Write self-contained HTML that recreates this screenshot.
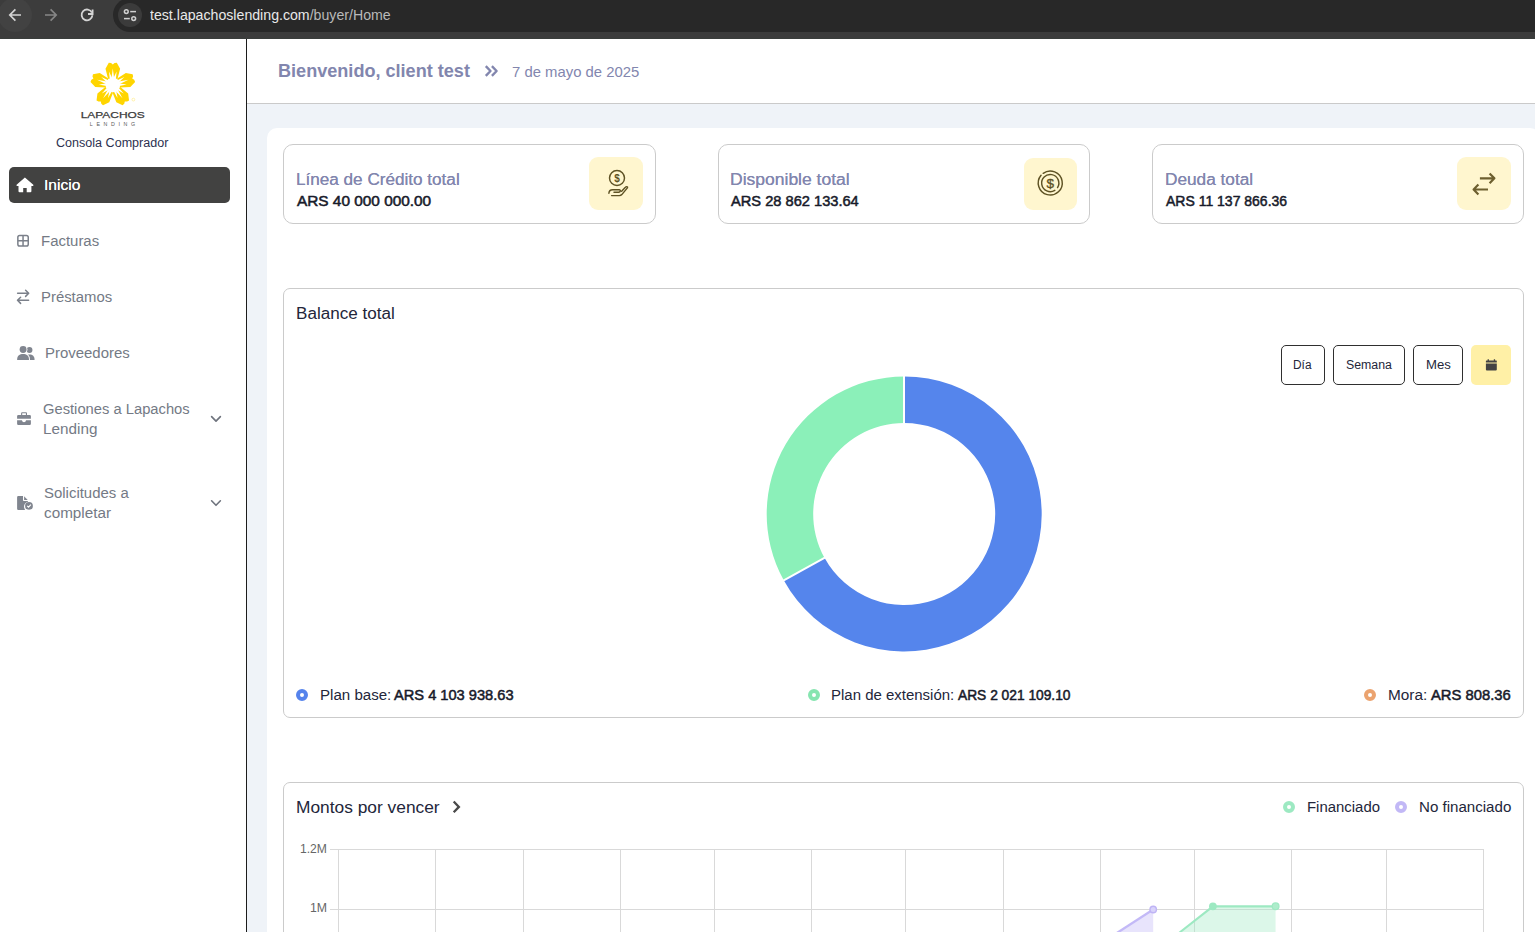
<!DOCTYPE html>
<html lang="es"><head><meta charset="utf-8"><title>Lapachos Lending - Consola Comprador</title>
<style>
*{box-sizing:border-box;margin:0;padding:0}
html,body{width:1535px;height:932px;overflow:hidden;background:#fff;font-family:"Liberation Sans",sans-serif}
.abs{position:absolute}
.t{position:absolute;white-space:nowrap;font-family:"Liberation Sans",sans-serif}
.t b{font-weight:400;-webkit-text-stroke:.5px currentColor}
#bar{position:absolute;left:0;top:0;width:1535px;height:38px;background:#3c3c3c}
#bar .edge{position:absolute;left:0;top:38px;width:1535px;height:1px;background:#3a3e3c}
#pill{position:absolute;left:113px;top:-2px;width:1500px;height:34px;border-radius:17px;background:#282828}
#tune{position:absolute;left:117.5px;top:3px;width:24px;height:24px;border-radius:12px;background:#3b3b3b}
#backhl{position:absolute;left:-2px;top:-2px;width:34px;height:34px;border-radius:17px;background:#424242}
#side{position:absolute;left:0;top:39px;width:246px;height:893px;background:#fff}
#sideline{position:absolute;left:246px;top:39px;width:1px;height:893px;background:#1c1c1c}
#sideline2{position:absolute;left:247px;top:39px;width:1px;height:893px;background:rgba(40,40,40,.28)}
#head{position:absolute;left:247px;top:39px;width:1288px;height:64px;background:#fff}
#headline{position:absolute;left:247px;top:103px;width:1288px;height:1px;background:#cacaca}
#main{position:absolute;left:247px;top:104px;width:1288px;height:828px;background:#eff3f8}
#cont{position:absolute;left:267px;top:128px;width:1273px;height:830px;background:#fff;border-radius:10px}
.card{position:absolute;border:1px solid #cbcbcb;border-radius:10px;background:#fff}
.ibox{position:absolute;width:54px;height:53px;border-radius:9px;background:#fff6cf}
#active{position:absolute;left:9px;top:167px;width:221px;height:36px;border-radius:5px;background:#424241}
.btn{position:absolute;top:345px;height:40px;border:1px solid #2f2f2f;border-radius:5px;background:#fff}
#cal{position:absolute;left:1471px;top:345px;width:40px;height:40px;border-radius:5px;background:#fff0a6}
.dot{position:absolute;width:12px;height:12px;border-radius:6px;border:4px solid;background:#fff}
svg{position:absolute;overflow:visible}

</style></head>
<body>
<div id="bar"><div id="backhl"></div><div id="pill"></div><div id="tune"></div><div class="edge"></div></div>
<div id="side"></div><div id="sideline"></div><div id="sideline2"></div>
<div id="head"></div><div id="headline"></div>
<div id="main"></div><div id="cont"></div>
<div id="active"></div>
<div class="card" style="left:283px;top:144px;width:373px;height:80px"></div>
<div class="card" style="left:718px;top:144px;width:372px;height:80px"></div>
<div class="card" style="left:1152px;top:144px;width:372px;height:80px"></div>
<div class="ibox" style="left:589px;top:157px"></div>
<div class="ibox" style="left:1024px;top:158px;width:53px;height:52px"></div>
<div class="ibox" style="left:1457px;top:157px"></div>
<div class="card" style="left:283px;top:288px;width:1241px;height:430px;border-radius:7px"></div>
<div class="card" style="left:283px;top:782px;width:1241px;height:300px;border-radius:7px"></div>
<div class="btn" style="left:1281px;width:44px"></div>
<div class="btn" style="left:1333px;width:72px"></div>
<div class="btn" style="left:1413px;width:50px"></div>
<div id="cal"></div>
<div class="dot" style="left:296px;top:689px;border-color:#5583ec"></div>
<div class="dot" style="left:808px;top:689px;border-color:#86e5b0"></div>
<div class="dot" style="left:1364px;top:689px;border-color:#eba36f"></div>
<div class="dot" style="left:1283px;top:801px;border-color:#9de9c2"></div>
<div class="dot" style="left:1395px;top:801px;border-color:#c2b8f6"></div>
<svg style="left:0;top:0" width="120" height="38" viewBox="0 0 120 38" fill="none" stroke-linecap="butt" stroke-linejoin="miter">
<path d="M21 15H10.2M15.4 9.4L9.8 15l5.6 5.6" stroke="#d4d4d4" stroke-width="1.7"/>
<path d="M45 15h10.8M50.6 9.4l5.6 5.6-5.6 5.6" stroke="#868686" stroke-width="1.7"/>
<path d="M91.9 12.6A5.4 5.4 0 1 0 92.4 15.3" stroke="#d4d4d4" stroke-width="1.8"/>
<path d="M92.6 9.4v4.6h-4.6" stroke="#d4d4d4" stroke-width="1.8"/>
</svg>
<svg style="left:117.5px;top:3px" width="24" height="24" viewBox="0 0 24 24" fill="none" stroke="#d0d0d0" stroke-width="1.5">
<circle cx="8.3" cy="8.6" r="1.9"/><path d="M12.2 8.6H18"/>
<circle cx="15.7" cy="15.6" r="1.9"/><path d="M6 15.6H11.8"/>
</svg>
<svg style="left:0;top:39px" width="246" height="120" viewBox="0 39 246 120">
<g transform="translate(112.8 84.9) scale(1.03)"><g transform="rotate(0)"><path d="M-4.6,-6 L-7.1,-15.6 L-3.9,-21.5 L-1.7,-21.3 L0,-19.8 L1.7,-21.3 L3.9,-21.5 L7.1,-15.6 L4.6,-6 Z" fill="#ffd500"/><path transform="rotate(-16)" d="M-1.5,-5 L0,-13.5 L1.5,-5 Z" fill="#fff"/><path transform="rotate(0)" d="M-1.5,-5 L0,-16 L1.5,-5 Z" fill="#fff"/><path transform="rotate(16)" d="M-1.5,-5 L0,-13.5 L1.5,-5 Z" fill="#fff"/></g><g transform="rotate(72)"><path d="M-4.6,-6 L-7.1,-15.6 L-3.9,-21.5 L-1.7,-21.3 L0,-19.8 L1.7,-21.3 L3.9,-21.5 L7.1,-15.6 L4.6,-6 Z" fill="#ffd500"/><path transform="rotate(-16)" d="M-1.5,-5 L0,-13.5 L1.5,-5 Z" fill="#fff"/><path transform="rotate(0)" d="M-1.5,-5 L0,-16 L1.5,-5 Z" fill="#fff"/><path transform="rotate(16)" d="M-1.5,-5 L0,-13.5 L1.5,-5 Z" fill="#fff"/></g><g transform="rotate(144)"><path d="M-4.6,-6 L-7.1,-15.6 L-3.9,-21.5 L-1.7,-21.3 L0,-19.8 L1.7,-21.3 L3.9,-21.5 L7.1,-15.6 L4.6,-6 Z" fill="#ffd500"/><path transform="rotate(-16)" d="M-1.5,-5 L0,-13.5 L1.5,-5 Z" fill="#fff"/><path transform="rotate(0)" d="M-1.5,-5 L0,-16 L1.5,-5 Z" fill="#fff"/><path transform="rotate(16)" d="M-1.5,-5 L0,-13.5 L1.5,-5 Z" fill="#fff"/></g><g transform="rotate(216)"><path d="M-4.6,-6 L-7.1,-15.6 L-3.9,-21.5 L-1.7,-21.3 L0,-19.8 L1.7,-21.3 L3.9,-21.5 L7.1,-15.6 L4.6,-6 Z" fill="#ffd500"/><path transform="rotate(-16)" d="M-1.5,-5 L0,-13.5 L1.5,-5 Z" fill="#fff"/><path transform="rotate(0)" d="M-1.5,-5 L0,-16 L1.5,-5 Z" fill="#fff"/><path transform="rotate(16)" d="M-1.5,-5 L0,-13.5 L1.5,-5 Z" fill="#fff"/></g><g transform="rotate(288)"><path d="M-4.6,-6 L-7.1,-15.6 L-3.9,-21.5 L-1.7,-21.3 L0,-19.8 L1.7,-21.3 L3.9,-21.5 L7.1,-15.6 L4.6,-6 Z" fill="#ffd500"/><path transform="rotate(-16)" d="M-1.5,-5 L0,-13.5 L1.5,-5 Z" fill="#fff"/><path transform="rotate(0)" d="M-1.5,-5 L0,-16 L1.5,-5 Z" fill="#fff"/><path transform="rotate(16)" d="M-1.5,-5 L0,-13.5 L1.5,-5 Z" fill="#fff"/></g><circle r="6.8" fill="#fff"/></g>
<circle cx="133.4" cy="99.6" r="1.4" fill="none" stroke="#ffe97a" stroke-width=".6"/>
<text x="80.7" y="117.7" font-family="Liberation Sans, sans-serif" font-weight="400" font-size="9.2" fill="#3b3b3b" stroke="#3b3b3b" stroke-width=".25" textLength="64.1" lengthAdjust="spacingAndGlyphs">LAPACHOS</text>
<text x="89.8" y="125.9" font-family="Liberation Sans, sans-serif" font-weight="400" font-size="5.3" fill="#5a5a5a" textLength="45.4" lengthAdjust="spacing">LENDING</text>
</svg>
<svg style="left:0;top:160px" width="246" height="370" viewBox="0 160 246 370">
<!-- home -->
<path d="M24.9 177.5 L16.6 184.7 V186.1 H18.5 V191.2 Q18.5 192.3 19.6 192.3 H23.2 V188 H26.7 V192.3 H30.3 Q31.4 192.3 31.4 191.2 V186.1 H33.3 V184.7 Z" fill="#fff"/>
<!-- grid -->
<g fill="none" stroke="#7b808a" stroke-width="1.5">
<rect x="17.85" y="235.55" width="10.4" height="10.4" rx="1.8"/>
<path d="M23.05 235.6V246M17.9 240.75H28.2"/>
</g>
<!-- arrows -->
<g fill="none" stroke="#7b808a" stroke-width="1.5" stroke-linecap="round" stroke-linejoin="round">
<path d="M17.6 293.3H28.6M25.6 290.3l3.1 3-3.1 3.1"/>
<path d="M28.6 300.3H17.6M20.6 297.3l-3.1 3 3.1 3.1"/>
</g>
<!-- users -->
<g fill="#80858f">
<circle cx="29.5" cy="350" r="2.95"/>
<path d="M25 359.9 C25 355.8 27 354.4 29.6 354.4 C32.6 354.4 34.6 356.2 34.6 359.9 Z"/>
<circle cx="23.1" cy="349.5" r="4.35" fill="#fff"/>
<path d="M17.1 359.9 C17.1 355.6 19.8 354.1 23.1 354.1 C26.4 354.1 29 355.6 29 359.9 Z" fill="#fff" stroke="#fff" stroke-width="2"/>
<circle cx="23.1" cy="349.5" r="3.45"/>
<path d="M17.1 359.9 C17.1 355.6 19.8 354.1 23.1 354.1 C26.4 354.1 29 355.6 29 359.9 Z"/>
</g>
<!-- briefcase -->
<g fill="#80858f">
<path d="M17.1 416.3 Q17.1 415.1 18.3 415.1 H29.7 Q30.9 415.1 30.9 416.3 V418.8 H17.1Z"/>
<path d="M17.1 420.2 H21.9 Q22.3 422.3 24 422.3 Q25.7 422.3 26.1 420.2 H30.9 V423.8 Q30.9 425 29.7 425 H18.3 Q17.1 425 17.1 423.8Z"/>
<path d="M21.1 415.3V413.2Q21.1 412.2 22.1 412.2H26Q27 412.2 27 413.2V415.3H25.9V413.3H22.2V415.3Z"/>
</g>
<!-- file check -->
<g fill="#80858f">
<path d="M18.3 496 H23 V500.2 Q23 501 23.8 501 H27.9 V501.8 A5 5 0 0 0 25.2 509.9 H18.3 Q17.1 509.9 17.1 508.7 V497.2 Q17.1 496 18.3 496Z"/>
<path d="M24.1 496.2 L27.7 499.9 H24.1Z"/>
<circle cx="29" cy="505.9" r="3.9"/>
</g>
<path d="M27.2 505.9l1.3 1.3 2.4-2.6" fill="none" stroke="#fff" stroke-width="1.1"/>
<!-- chevrons -->
<g fill="none" stroke="#6e737d" stroke-width="1.6" stroke-linecap="round" stroke-linejoin="round">
<path d="M211.6 416.6l4.4 4.5 4.4-4.5"/>
<path d="M211.6 500.8l4.4 4.5 4.4-4.5"/>
</g>
</svg>
<svg style="left:580px;top:150px" width="950" height="70" viewBox="580 150 950 70" fill="none" stroke="#5e5224" stroke-width="1.45" stroke-linecap="round" stroke-linejoin="round">
<!-- hand coin -->
<circle cx="617" cy="178" r="7.5"/>
<path d="M608.9 193.3 C609 190.9 610.6 189.7 612.6 189.7 H619.1 Q620.6 189.9 620.3 191 Q620 192.1 618.8 192.2 H614"/>
<path d="M611.6 195.6 H619.4 Q620.9 195.6 621.8 194.6 L627.4 187.9 Q627.9 186.6 626.6 186.6 Q626 186.6 625.4 187.3 L621.6 191.3"/>
<text x="617" y="181.6" text-anchor="middle" font-family="Liberation Sans, sans-serif" font-weight="700" font-size="10" fill="#5e5224" stroke="none">$</text>
<!-- double circle -->
<path d="M1043.20 173.34A12 12 0 1 1 1041.06 175.34"/><path d="M1054.81 190.34A8.6 8.6 0 1 1 1057.54 187.61"/>
<text x="1050.3" y="187.8" text-anchor="middle" font-family="Liberation Sans, sans-serif" font-weight="400" font-size="13.5" fill="#5e5224" stroke="#5e5224" stroke-width=".35">$</text>
<!-- arrows -->
<g stroke="#6d5f2f" stroke-width="2.2" stroke-linecap="butt" stroke-linejoin="round">
<path d="M1479.9 178.3H1493.5M1489.6 173.4l4.8 4.9-4.8 4.9"/>
<path d="M1488 189.5H1474.5M1478.4 184.6l-4.8 4.9 4.8 4.9"/>
</g>
</svg>
<svg style="left:760px;top:370px" width="290" height="290" viewBox="760 370 290 290"><path d="M904.20 376.50A137.5 137.5 0 1 1 783.73 580.29L824.47 557.87A91.0 91.0 0 1 0 904.20 423.00Z" fill="#5585ec"/><path d="M783.73 580.29A137.5 137.5 0 0 1 904.09 376.50L904.12 423.00A91.0 91.0 0 0 0 824.47 557.87Z" fill="#8bf0b9"/><path d="M904 424.5V375.5" stroke="#fff" stroke-width="2"/><path d="M825.35 557.39L782.86 580.77" stroke="#fff" stroke-width="2"/></svg>
<svg style="left:1480px;top:355px" width="22" height="20" viewBox="1480 355 22 20" fill="#434343">
<path d="M1487.6 359.2h1.3v1.3h4.9v-1.3h1.3v1.3h1.2q.5 0 .5 .5v1.6h-10.9v-1.6q0-.5 .5-.5h1.2z"/>
<path d="M1485.9 363.5h10.9v6.1q0 1-1 1h-8.9q-1 0-1-1z"/>
</svg>
<svg style="left:283px;top:783px" width="1241" height="149" viewBox="283 783 1241 149"><g stroke="#d9d9d9" stroke-width="1" fill="none"><path d="M330 849.5H1484"/><path d="M330 909.5H1484"/><path d="M338.5 849V932"/><path d="M435.5 849V932"/><path d="M523.5 849V932"/><path d="M620.5 849V932"/><path d="M714.5 849V932"/><path d="M811.5 849V932"/><path d="M905.5 849V932"/><path d="M1003.5 849V932"/><path d="M1100.5 849V932"/><path d="M1194.5 849V932"/><path d="M1291.5 849V932"/><path d="M1386.5 849V932"/><path d="M1483.5 849V932"/></g><path d="M1118.4 932L1153.2 909.5V932Z" fill="#c3b9f7" fill-opacity=".38"/><path d="M1116.9 933L1153.2 909.5" stroke="#c3b9f7" stroke-width="2.2" fill="none"/><circle cx="1153.2" cy="909.5" r="3.2" fill="#d9d3fa" stroke="#bfb4f5" stroke-width="1.4"/><path d="M1180.3 932L1212.9 906.3H1275.6V932Z" fill="#9de9c2" fill-opacity=".36"/><path d="M1179 933L1212.9 906.3H1275.6" stroke="#9de9c2" stroke-width="2.2" fill="none" stroke-linejoin="round"/><circle cx="1212.9" cy="906.3" r="3.9" fill="#9de9c2"/><circle cx="1275.6" cy="906.3" r="3.4" fill="#aeeccb" stroke="#9de9c2" stroke-width="1.2"/></svg>
<svg style="left:480px;top:60px" width="24" height="22" viewBox="480 60 24 22" fill="none" stroke="#8286ae" stroke-width="2.4" stroke-linecap="butt" stroke-linejoin="round">
<path d="M485.8 66.2l4.7 4.8-4.7 4.8M491.9 66.2l4.7 4.8-4.7 4.8"/></svg>
<svg style="left:448px;top:798px" width="18" height="18" viewBox="448 798 18 18" fill="none" stroke="#494949" stroke-width="2.3" stroke-linecap="butt" stroke-linejoin="miter">
<path d="M453.7 801.5l5.2 5.4-5.2 5.4"/></svg>

<span class="t" id="url" style="left:149.6px;top:8.00px;font-size:14px;line-height:14px;font-weight:400;color:#e9e9e9;transform-origin:0 0;transform:scaleX(1.0106);">test.lapachoslending.com<span style="color:#b9b9b9">/buyer/Home</span></span>
<span class="t" id="consola" style="left:56.2px;top:137.00px;font-size:12px;line-height:12px;font-weight:400;color:#2c3150;transform-origin:0 0;transform:scaleX(1.0467);">Consola Comprador</span>
<span class="t" id="inicio" style="left:43.9px;top:177.00px;font-size:15px;line-height:15px;font-weight:400;color:#ffffff;transform-origin:0 0;transform:scaleX(1.0383);text-shadow:0 0 .6px #fff;">Inicio</span>
<span class="t" id="fact" style="left:40.5px;top:234.00px;font-size:14px;line-height:14px;font-weight:400;color:#747a85;transform-origin:0 0;transform:scaleX(1.0679);">Facturas</span>
<span class="t" id="prest" style="left:40.5px;top:290.00px;font-size:14px;line-height:14px;font-weight:400;color:#747a85;transform-origin:0 0;transform:scaleX(1.0632);">Préstamos</span>
<span class="t" id="prov" style="left:45.2px;top:346.00px;font-size:14px;line-height:14px;font-weight:400;color:#747a85;transform-origin:0 0;transform:scaleX(1.0677);">Proveedores</span>
<span class="t" id="gest1" style="left:42.7px;top:402.00px;font-size:14px;line-height:14px;font-weight:400;color:#747a85;transform-origin:0 0;transform:scaleX(1.0527);">Gestiones a Lapachos</span>
<span class="t" id="gest2" style="left:42.5px;top:422.00px;font-size:14px;line-height:14px;font-weight:400;color:#747a85;transform-origin:0 0;transform:scaleX(1.0912);">Lending</span>
<span class="t" id="sol1" style="left:44.4px;top:486.00px;font-size:14px;line-height:14px;font-weight:400;color:#747a85;transform-origin:0 0;transform:scaleX(1.0672);">Solicitudes a</span>
<span class="t" id="sol2" style="left:44.4px;top:506.00px;font-size:14px;line-height:14px;font-weight:400;color:#747a85;transform-origin:0 0;transform:scaleX(1.0906);">completar</span>
<span class="t" id="bienv" style="left:278.4px;top:63.00px;font-size:17.5px;line-height:17.5px;font-weight:700;color:#8286ae;transform-origin:0 0;transform:scaleX(1.0334);">Bienvenido, client test</span>
<span class="t" id="fecha" style="left:511.5px;top:64.00px;font-size:15px;line-height:15px;font-weight:400;color:#8286ae;transform-origin:0 0;transform:scaleX(0.9909);">7 de mayo de 2025</span>
<span class="t" id="c1a" style="left:295.6px;top:172.00px;font-size:16px;line-height:16px;font-weight:400;color:#8286ae;transform-origin:0 0;transform:scaleX(1.0699);text-shadow:0 0 .4px #8286ae;">Línea de Crédito total</span>
<span class="t" id="c1b" style="left:296.9px;top:194.00px;font-size:14px;line-height:14px;font-weight:400;color:#171a2a;transform-origin:0 0;transform:scaleX(1.0977);-webkit-text-stroke:.5px #171a2a;">ARS 40 000 000.00</span>
<span class="t" id="c2a" style="left:729.7px;top:172.00px;font-size:16px;line-height:16px;font-weight:400;color:#8286ae;transform-origin:0 0;transform:scaleX(1.0942);text-shadow:0 0 .4px #8286ae;">Disponible total</span>
<span class="t" id="c2b" style="left:731.1px;top:194.00px;font-size:14px;line-height:14px;font-weight:400;color:#171a2a;transform-origin:0 0;transform:scaleX(1.0454);-webkit-text-stroke:.5px #171a2a;">ARS 28 862 133.64</span>
<span class="t" id="c3a" style="left:1164.7px;top:172.00px;font-size:16px;line-height:16px;font-weight:400;color:#8286ae;transform-origin:0 0;transform:scaleX(1.0767);text-shadow:0 0 .4px #8286ae;">Deuda total</span>
<span class="t" id="c3b" style="left:1166.0px;top:194.00px;font-size:14px;line-height:14px;font-weight:400;color:#171a2a;transform-origin:0 0;transform:scaleX(0.9994);-webkit-text-stroke:.5px #171a2a;">ARS 11 137 866.36</span>
<span class="t" id="bal" style="left:295.7px;top:306.00px;font-size:16px;line-height:16px;font-weight:400;color:#23263a;transform-origin:0 0;transform:scaleX(1.0669);">Balance total</span>
<span class="t" id="dia" style="left:1293.2px;top:359.00px;font-size:12px;line-height:12px;font-weight:400;color:#23263a;transform-origin:0 0;transform:scaleX(0.9901);">Día</span>
<span class="t" id="sem" style="left:1345.5px;top:359.00px;font-size:12px;line-height:12px;font-weight:400;color:#23263a;transform-origin:0 0;transform:scaleX(1.0270);">Semana</span>
<span class="t" id="mes" style="left:1425.6px;top:359.00px;font-size:12px;line-height:12px;font-weight:400;color:#23263a;transform-origin:0 0;transform:scaleX(1.0952);">Mes</span>
<span class="t" id="lg1a" style="left:319.6px;top:688.00px;font-size:14px;line-height:14px;font-weight:400;color:#23263a;transform-origin:0 0;transform:scaleX(1.0776);">Plan base:</span>
<span class="t" id="lg1b" style="left:394.0px;top:688.00px;font-size:14px;line-height:14px;font-weight:400;color:#171a2a;transform-origin:0 0;transform:scaleX(1.0450);"><b>ARS 4 103 938.63</b></span>
<span class="t" id="lg2a" style="left:830.6px;top:688.00px;font-size:14px;line-height:14px;font-weight:400;color:#23263a;transform-origin:0 0;transform:scaleX(1.0697);">Plan de extensión:</span>
<span class="t" id="lg2b" style="left:957.7px;top:688.00px;font-size:14px;line-height:14px;font-weight:400;color:#171a2a;transform-origin:0 0;transform:scaleX(0.9833);"><b>ARS 2 021 109.10</b></span>
<span class="t" id="lg3a" style="left:1387.8px;top:688.00px;font-size:14px;line-height:14px;font-weight:400;color:#23263a;transform-origin:0 0;transform:scaleX(1.0968);">Mora:</span>
<span class="t" id="lg3b" style="left:1431.3px;top:688.00px;font-size:14px;line-height:14px;font-weight:400;color:#171a2a;transform-origin:0 0;transform:scaleX(1.0570);"><b>ARS 808.36</b></span>
<span class="t" id="montos" style="left:295.6px;top:800.00px;font-size:16px;line-height:16px;font-weight:400;color:#23263a;transform-origin:0 0;transform:scaleX(1.0840);">Montos por vencer</span>
<span class="t" id="fin" style="left:1306.5px;top:800.00px;font-size:14px;line-height:14px;font-weight:400;color:#23263a;transform-origin:0 0;transform:scaleX(1.0656);">Financiado</span>
<span class="t" id="nofin" style="left:1418.7px;top:800.00px;font-size:14px;line-height:14px;font-weight:400;color:#23263a;transform-origin:0 0;transform:scaleX(1.0779);">No financiado</span>
<span class="t" id="y12" style="left:300.3px;top:843.00px;font-size:12px;line-height:12px;font-weight:400;color:#666;transform-origin:0 0;transform:scaleX(1.0112);">1.2M</span>
<span class="t" id="y1" style="left:310.3px;top:902.00px;font-size:12px;line-height:12px;font-weight:400;color:#666;transform-origin:0 0;transform:scaleX(1.0249);">1M</span>
</body></html>
